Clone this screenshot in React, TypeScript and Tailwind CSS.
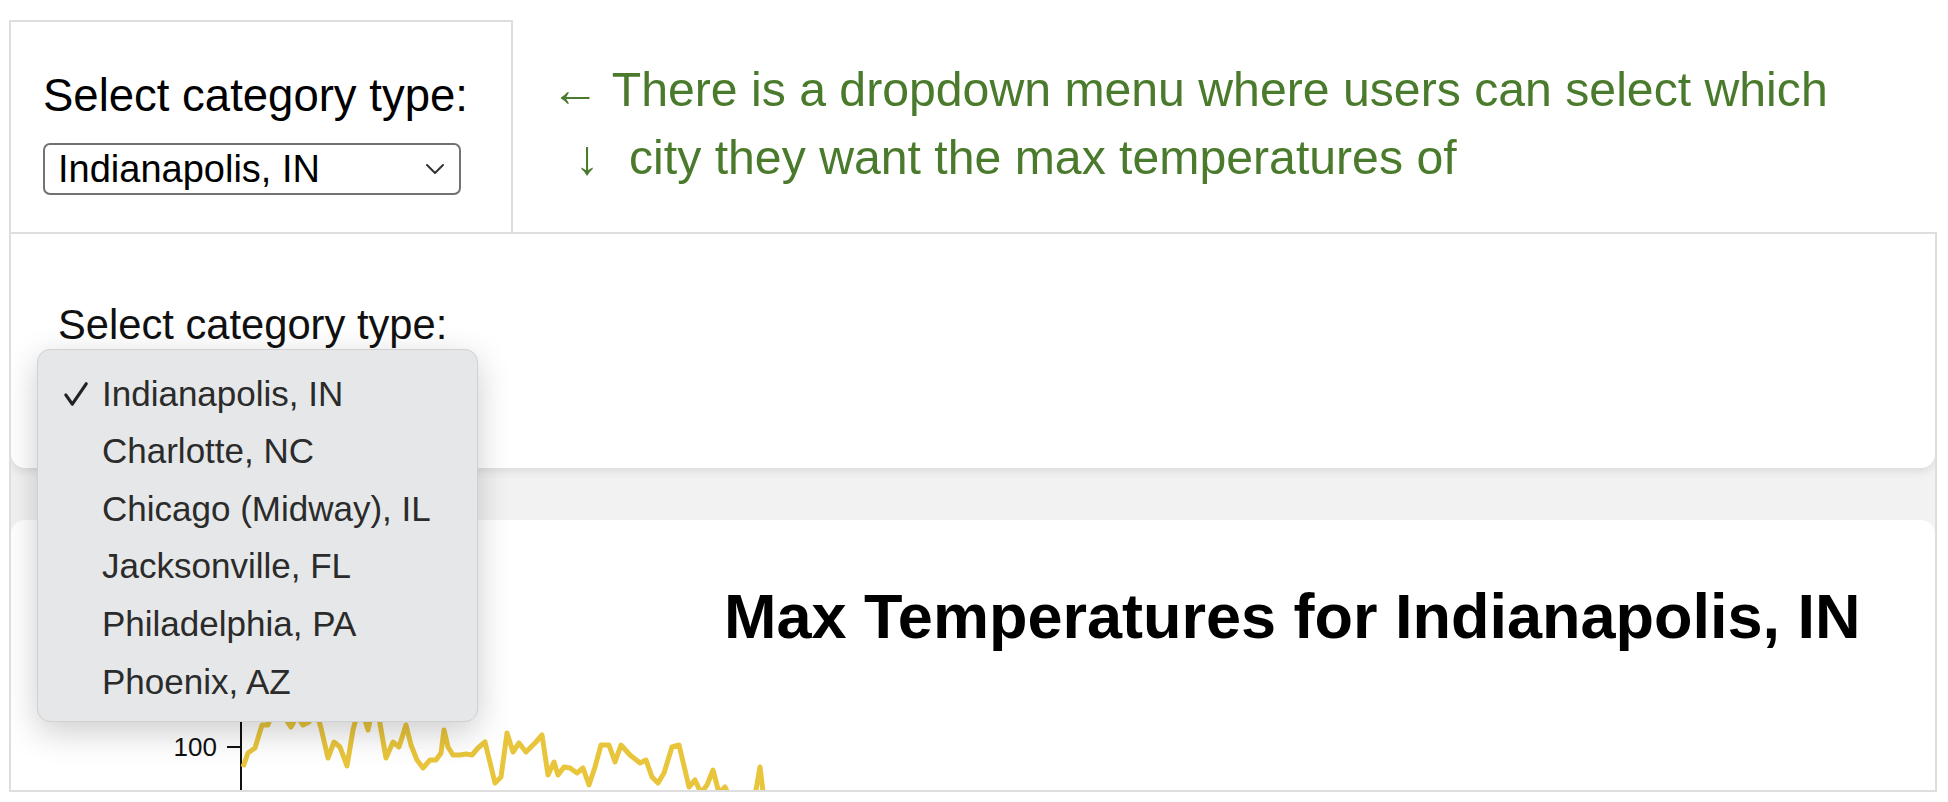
import React from "react";

const rawPts: [number, number][] = [
  [243,767],[248,753],[255,748],[262,725],[268,725],[272,712],[278,705],[285,718],[291,727],[297,716],[303,725],[309,722],[315,708],[321,728],[328,758],[334,742],[340,747],[347,766],[353,730],[357,715],[362,710],[368,730],[372,712],[379,718],[386,758],[393,742],[399,747],[406,725],[411,745],[417,760],[423,768],[430,760],[436,760],[441,753],[444,730],[448,747],[453,755],[460,755],[466,754],[472,755],[478,748],[485,742],[495,783],[501,777],[507,733],[513,752],[519,743],[526,752],[536,742],[542,735],[548,775],[554,762],[558,775],[564,767],[570,768],[577,773],[583,768],[589,785],[595,767],[601,745],[609,745],[615,762],[621,745],[630,755],[640,763],[646,760],[652,777],[658,783],[664,773],[672,747],[679,745],[685,770],[689,787],[695,780],[701,793],[707,785],[713,770],[719,793],[725,787],[731,800],[740,810],[750,800],[756,790],[760,767],[764,800],[770,815]
];

const OX = 11;
const OY = 652;
const linePts = rawPts.map(([x, y]) => `${x - OX},${y - OY}`).join(" ");

const cities = [
  "Indianapolis, IN",
  "Charlotte, NC",
  "Chicago (Midway), IL",
  "Jacksonville, FL",
  "Philadelphia, PA",
  "Phoenix, AZ",
];

export default function App() {
  return (
    <div className="w-[1948px] h-[802px] bg-white overflow-hidden font-['Liberation_Sans',Arial,sans-serif]">
      {/* top row */}
      <div className="flex pt-[20px] pl-[9px]">
        <div className="w-[504px] h-[212px] border-2 border-b-0 border-[#dedede] pl-[32px] pt-[48px]">
          <div className="text-[45.5px] leading-[52px] text-black">Select category type:</div>
          <div className="mt-[21px] w-[418px] h-[52px] border-2 border-[#727272] rounded-[7px] flex items-center justify-between pl-[13px] pr-[14px]">
            <span className="text-[38px] leading-none text-black">Indianapolis, IN</span>
            <svg width="20" height="12" viewBox="0 0 20 12" fill="none">
              <path d="M2 2 L10 10 L18 2" stroke="#333" strokeWidth="2" strokeLinecap="round" strokeLinejoin="round" />
            </svg>
          </div>
        </div>
        <div className="ml-[38px] mt-[35px] text-[#4a7a2b] text-[48.2px] leading-[68px]">
          <div>← There is a dropdown menu where users can select which</div>
          <div className="flex">
            <span className="w-[78px] pl-[24px]">↓</span>
            <span>city they want the max temperatures of</span>
          </div>
        </div>
      </div>

      {/* bottom screenshot */}
      <div className="ml-[9px] w-[1928px] h-[560px] border-2 border-[#dedede] bg-[#f2f2f2] relative overflow-hidden flex flex-col">
        <div className="h-[234px] shrink-0 bg-white rounded-b-[14px] shadow-[0_3px_10px_rgba(0,0,0,0.10)] pl-[47px] pt-[67px] relative z-10">
          <div className="text-[41.7px] leading-[48px] text-[#111]">Select category type:</div>
        </div>
        <div className="mt-[52px] flex-1 bg-white rounded-t-[14px] flex flex-col">
          <div className="pt-[60px] pl-[713px] text-[63px] leading-[72px] font-bold text-black whitespace-nowrap">
            Max Temperatures for Indianapolis, IN
          </div>
          <svg width="1924" height="138" className="block">
            <line x1={241 - OX} y1={0} x2={241 - OX} y2={140} stroke="#111" strokeWidth="2" />
            <line x1={227 - OX} y1={747 - OY} x2={241 - OX} y2={747 - OY} stroke="#111" strokeWidth="2" />
            <text x={217 - OX} y={747 - OY + 9} textAnchor="end" fontSize="26" fontFamily="Liberation Sans, Arial, sans-serif" fill="#111">100</text>
            <polyline points={linePts} fill="none" stroke="#e8c53b" strokeWidth="5" strokeLinejoin="round" />
          </svg>
        </div>

        {/* open dropdown menu */}
        <div className="absolute left-[26px] top-[115px] w-[441px] h-[373px] z-20 bg-[#e5e7e8] rounded-[13px] border border-[#cfd1d2] shadow-[0_10px_34px_rgba(0,0,0,0.20)] pt-[15px]">
          {cities.map((c, i) => (
            <div key={c} className="h-[57.6px] flex items-center text-[35px] text-[#2b2b2b]">
              <div className="w-[64px] flex justify-end pr-[13px]">
                {i === 0 && (
                  <svg width="26" height="26" viewBox="0 0 28 28" fill="none">
                    <path d="M3 15 L10 25 L25 3" stroke="#222" strokeWidth="3.4" strokeLinecap="round" strokeLinejoin="round" />
                  </svg>
                )}
              </div>
              <span>{c}</span>
            </div>
          ))}
        </div>
      </div>
    </div>
  );
}
